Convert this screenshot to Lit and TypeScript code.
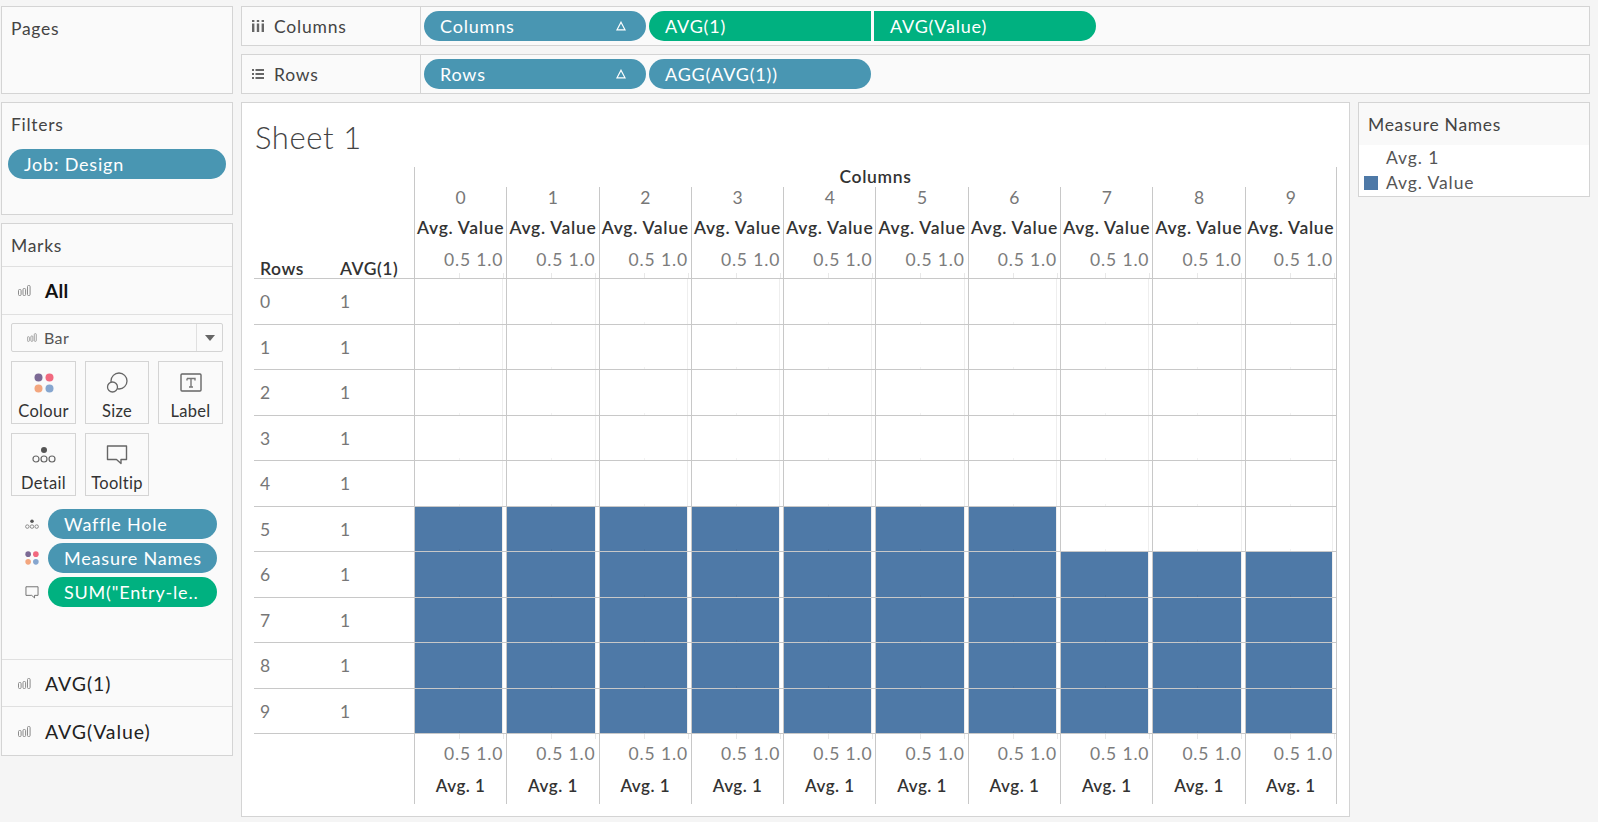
import { LitElement, html, css, svg } from "lit";
import { customElement } from "lit/decorators.js";

const barIcon = (w = 13, h = 11, c = "#8c8c8c") => html`<svg class="ic" width=${w} height=${h} viewBox="0 0 13 11" fill="none" stroke=${c} stroke-width="1"><rect x="0.5" y="4.5" width="2.6" height="6" rx="1"/><rect x="5" y="3.5" width="2.6" height="7" rx="1"/><rect x="9.5" y="0.5" width="2.6" height="10" rx="1"/></svg>`;
const colourIcon = (s = 20) => html`<svg width=${s} height=${s} viewBox="0 0 20 20"><circle cx="4.5" cy="4.5" r="4" fill="#7c6a95"/><circle cx="15.5" cy="4.5" r="4" fill="#f1697f"/><circle cx="4.5" cy="15.5" r="4" fill="#f3a67e"/><circle cx="15.5" cy="15.5" r="4" fill="#86a6cf"/></svg>`;
const sizeIcon = html`<svg width="22" height="22" viewBox="0 0 22 22" fill="none" stroke="#666" stroke-width="1.3"><circle cx="13" cy="9" r="8"/><circle cx="6.5" cy="15" r="5" fill="#fafafa"/></svg>`;
const labelIcon = html`<svg width="22" height="20" viewBox="0 0 22 20" fill="none"><rect x="1" y="1" width="20" height="17" rx="1" stroke="#666" stroke-width="1.4"/><path d="M7 5.5h8v2M11 5.5v8.5M9 14h4M7 7.5v-2" stroke="#777" stroke-width="1.4"/></svg>`;
const detailIcon = (s = 24) => html`<svg width=${s} height=${s * 0.75} viewBox="0 0 24 18" fill="none" stroke="#666" stroke-width="1.2"><circle cx="12" cy="4" r="3" fill="#555" stroke="none"/><circle cx="4" cy="13" r="3"/><circle cx="12" cy="13" r="3"/><circle cx="20" cy="13" r="3"/></svg>`;
const tipIcon = (w = 22, h = 20, c = "#666") => html`<svg width=${w} height=${h} viewBox="0 0 22 20" fill="none" stroke=${c} stroke-width="1.4" stroke-linejoin="round"><path d="M1.5 1h19v13.5h-5.5v4l-4.5-4h-9z"/></svg>`;
const delta = html`<svg class="delta" width="10" height="10" viewBox="0 0 10 10" fill="none" stroke="#fff" stroke-width="1.2"><path d="M5 1.2 9 8.8H1z"/></svg>`;
const colsIcon = html`<svg width="12" height="12" viewBox="0 0 12 12" fill="#666">${svg`<rect x="0" y="0" width="2.4" height="2"/><rect x="0" y="3.5" width="2.4" height="8.5"/><rect x="4.8" y="0" width="2.4" height="2"/><rect x="4.8" y="3.5" width="2.4" height="8.5"/><rect x="9.6" y="0" width="2.4" height="2"/><rect x="9.6" y="3.5" width="2.4" height="8.5"/>`}</svg>`;
const rowsIcon = html`<svg width="12" height="10" viewBox="0 0 12 10" fill="#666">${svg`<rect x="0" y="0" width="2" height="2"/><rect x="3.5" y="0" width="8.5" height="2"/><rect x="0" y="4" width="2" height="2"/><rect x="3.5" y="4" width="8.5" height="2"/><rect x="0" y="8" width="2" height="2"/><rect x="3.5" y="8" width="8.5" height="2"/>`}</svg>`;

const COLS = [0, 1, 2, 3, 4, 5, 6, 7, 8, 9];
const firstFilled = (col: number) => (col <= 6 ? 5 : 6);

@customElement("app-root")
export class AppRoot extends LitElement {
  static styles = css`
    :host { display: block; width: 1598px; height: 822px; background: #f5f5f5; font-family: "Lato", sans-serif; color: #444; overflow: hidden; }
    * { box-sizing: border-box; }
    .page { display: grid; grid-template-columns: 232px 1349px; column-gap: 8px; padding: 6px 0 0 1px; height: 822px; }
    .left { display: flex; flex-direction: column; gap: 8px; height: 750px; }
    .right { display: flex; flex-direction: column; gap: 8px; }
    .card { background: #fafafa; border: 1px solid #d4d4d4; }
    .cardtitle { font-size: 17.5px; letter-spacing: 0.7px; line-height: 22px; color: #444; padding: 11px 0 0 9px; }
    .pages { height: 88px; }
    .filters { height: 113px; }
    .pill { display: flex; align-items: center; height: 30px; border-radius: 15px; background: #4996b2; color: #fff; font-size: 18px; letter-spacing: 0.8px; padding-left: 16px; white-space: nowrap; flex: none; }
    .pill.green { background: #00b180; }
    .pill.sl { border-top-right-radius: 0; border-bottom-right-radius: 0; }
    .pill.sr { border-top-left-radius: 0; border-bottom-left-radius: 0; }
    .filters .pill { margin: 13px 6px 0 6px; }
    .delta { margin-left: auto; margin-right: 20px; }
    .marks { flex: 1; display: flex; flex-direction: column; }
    .marks .cardtitle { height: 43px; border-bottom: 1px solid #e0e0e0; padding-top: 11px; }
    .mrow { display: flex; align-items: center; height: 48px; border-bottom: 1px solid #e0e0e0; padding-left: 16px; font-size: 19.5px; letter-spacing: 0.9px; color: #222; }
    .mrow .ic { margin-right: 14px; }
    .mrow.all { font-weight: 700; color: #111; font-size: 19px; letter-spacing: 0.3px; padding-bottom: 1px; }
    .mrow.last { border-bottom: none; }
    .mbody { flex: 1; padding: 8px 9px 0 9px; }
    .dd { display: flex; align-items: center; height: 29px; width: 212px; margin-bottom: 9px; border: 1px solid #d4d4d4; border-radius: 2px; font-size: 16px; letter-spacing: 0.4px; color: #555; padding-left: 15px; }
    .dd .ic { margin-right: 7px; }
    .dd .arrow { margin-left: auto; width: 26px; height: 100%; border-left: 1px solid #e0e0e0; display: flex; align-items: center; justify-content: center; }
    .tri { width: 0; height: 0; border: 5px solid transparent; border-top: 6px solid #666; border-bottom: none; }
    .btns { display: grid; grid-template-columns: 65px 64px 65px; column-gap: 9px; row-gap: 9px; grid-auto-rows: 63px; }
    .btn { border: 1px solid #d4d4d4; display: flex; flex-direction: column; align-items: center; font-size: 16.5px; letter-spacing: 0.3px; color: #333; }
    .btn .iw { height: 39px; display: flex; align-items: center; justify-content: center; padding-top: 3px; }
    .btn .lb { line-height: 20px; }
    .fields { display: flex; flex-direction: column; gap: 4px; margin-top: 13px; }
    .fields .f { display: flex; align-items: center; }
    .fields .fi { width: 37px; display: flex; justify-content: flex-end; padding-right: 9px; }
    .fields .pill { width: 169px; }
    .shelf { display: flex; height: 40px; background: #fafafa; border: 1px solid #d4d4d4; align-items: center; }
    .shelf .name { width: 179px; height: 100%; border-right: 1px solid #d4d4d4; display: flex; align-items: center; font-size: 17.5px; letter-spacing: 0.8px; padding-left: 10px; gap: 10px; color: #444; flex: none; }
    .shelf .pills { display: flex; padding-left: 3px; }
    .pills .pill { width: 222px; margin-right: 3px; }
    .bottom { display: flex; gap: 8px; }
    .view { width: 1109px; height: 715px; background: #fff; border: 1px solid #d4d4d4; padding-left: 12px; }
    .sheet { height: 64px; font-size: 31px; letter-spacing: 0.6px; font-weight: 300; color: #444; padding: 14px 0 0 1px; line-height: 40px; }
    .table { display: grid; grid-template-columns: 80px 80px repeat(10, 92.3px); grid-template-rows: 20px 21px 36px 35px repeat(10, 45.5px) 37px 33px; font-size: 16px; }
    .corner { grid-column: 1 / 3; grid-row: 1 / 2; }
    .colhead { grid-column: 3 / 13; border-left: 1px solid #c8c8c8; border-right: 1px solid #c8c8c8; text-align: center; font-size: 17.5px; letter-spacing: 0.65px; font-weight: 600; color: #333; line-height: 20px; }
    .rh { grid-row: 2 / 5; display: flex; align-items: flex-end; padding: 0 0 0 6px; font-size: 17.5px; letter-spacing: 0.55px; font-weight: 600; color: #333; line-height: 18px; border-bottom: 1px solid #c8c8c8; }
    .vl { border-left: 1px solid #c8c8c8; text-align: center; white-space: nowrap; overflow: hidden; position: relative; }
    .vl.end { border-right: 1px solid #c8c8c8; }
    .num { color: #777; font-size: 17.5px; line-height: 21px; }
    .mn { font-size: 17.5px; letter-spacing: 0.7px; font-weight: 600; color: #333; line-height: 36px; padding-top: 2px; }
    .ax { color: #7c7c7c; font-size: 17.5px; letter-spacing: 0.85px; text-align: right; padding-right: 3px; }
    .ax.top { line-height: 32px; border-bottom: 1px solid #c8c8c8; }
    .ax.bot { line-height: 40px; }
    .ax::before, .ax::after { content: ""; position: absolute; width: 1px; height: 5px; background: #e8e8e8; }
    .ax.top::before { bottom: 0; left: 44px; }
    .ax.top::after { bottom: 0; left: 88px; }
    .ax.bot::before { top: 0; left: 44px; }
    .ax.bot::after { top: 0; left: 88px; }
    .rc { padding: 1px 0 0 6px; color: #777; font-size: 17.5px; line-height: 44px; border-bottom: 1px solid #c8c8c8; }
    .cell { border-left: 1px solid #c8c8c8; border-bottom: 1px solid #c8c8c8; padding-right: 3px; position: relative; }
    .cell.end { border-right: 1px solid #c8c8c8; }
    .inner { height: 100%; border-right: 1px solid #eeeeee; }
    .bar { height: 100%; background: #4e79a7; }
    .tick { position: absolute; left: 44px; bottom: 0; width: 1px; height: 2px; background: rgba(0, 0, 0, 0.05); }
    .foot { text-align: center; font-size: 17px; letter-spacing: 0.5px; font-weight: 600; color: #333; line-height: 30px; }
    .legend { width: 232px; height: 95px; background: #fff; border: 1px solid #d4d4d4; }
    .legend .cardtitle { height: 42px; background: #f9f9f9; }
    .li { display: flex; align-items: center; height: 25px; font-size: 17.5px; letter-spacing: 0.9px; color: #555; padding-left: 5px; gap: 8px; }
    .sw { width: 14px; height: 14px; flex: none; }
    .sw.on { background: #4e79a7; }
  `;

  render() {
    return html`<div class="page">
      <div class="left">
        <div class="card pages"><div class="cardtitle">Pages</div></div>
        <div class="card filters"><div class="cardtitle">Filters</div><div class="pill">Job: Design</div></div>
        <div class="card marks">
          <div class="cardtitle">Marks</div>
          <div class="mrow all">${barIcon()}All</div>
          <div class="mbody">
            <div class="dd">${barIcon(10, 9)}Bar<span class="arrow"><span class="tri"></span></span></div>
            <div class="btns">
              <div class="btn"><span class="iw">${colourIcon()}</span><span class="lb">Colour</span></div>
              <div class="btn"><span class="iw">${sizeIcon}</span><span class="lb">Size</span></div>
              <div class="btn"><span class="iw">${labelIcon}</span><span class="lb">Label</span></div>
              <div class="btn"><span class="iw">${detailIcon()}</span><span class="lb">Detail</span></div>
              <div class="btn"><span class="iw">${tipIcon()}</span><span class="lb">Tooltip</span></div>
            </div>
            <div class="fields">
              <div class="f"><span class="fi">${detailIcon(14)}</span><div class="pill">Waffle Hole</div></div>
              <div class="f"><span class="fi">${colourIcon(14)}</span><div class="pill">Measure Names</div></div>
              <div class="f"><span class="fi">${tipIcon(14, 13)}</span><div class="pill green">SUM("Entry-le..</div></div>
            </div>
          </div>
          <div class="mrow" style="border-top:1px solid #e0e0e0">${barIcon()}AVG(1)</div>
          <div class="mrow last">${barIcon()}AVG(Value)</div>
        </div>
      </div>
      <div class="right">
        <div class="shelf"><div class="name">${colsIcon}Columns</div><div class="pills">
          <div class="pill">Columns${delta}</div><div class="pill green sl">AVG(1)</div><div class="pill green sr" style="margin-left:0">AVG(Value)</div></div></div>
        <div class="shelf"><div class="name">${rowsIcon}Rows</div><div class="pills">
          <div class="pill">Rows${delta}</div><div class="pill">AGG(AVG(1))</div></div></div>
        <div class="bottom">
          <div class="view">
            <div class="sheet">Sheet 1</div>
            <div class="table">
              <div class="corner"></div>
              <div class="colhead">Columns</div>
              <div class="rh" style="grid-column:1">Rows</div>
              <div class="rh" style="grid-column:2">AVG(1)</div>
              ${COLS.map((c) => html`<div class="vl num ${c === 9 ? "end" : ""}" style="grid-row:2;grid-column:${c + 3}">${c}</div>`)}
              ${COLS.map((c) => html`<div class="vl mn ${c === 9 ? "end" : ""}" style="grid-row:3;grid-column:${c + 3}">Avg. Value</div>`)}
              ${COLS.map((c) => html`<div class="vl ax top ${c === 9 ? "end" : ""}" style="grid-row:4;grid-column:${c + 3}">0.5 1.0</div>`)}
              ${COLS.map((r) => html`
                <div class="rc">${r}</div><div class="rc">1</div>
                ${COLS.map((c) => html`<div class="cell ${c === 9 ? "end" : ""}"><div class="inner">${r >= firstFilled(c) ? html`<div class="bar"></div>` : ""}</div><span class="tick"></span></div>`)}
              `)}
              ${COLS.map((c) => html`<div class="vl ax bot ${c === 9 ? "end" : ""}" style="grid-row:15;grid-column:${c + 3}">0.5 1.0</div>`)}
              ${COLS.map((c) => html`<div class="vl foot ${c === 9 ? "end" : ""}" style="grid-row:16;grid-column:${c + 3}">Avg. 1</div>`)}
            </div>
          </div>
          <div class="legend">
            <div class="cardtitle">Measure Names</div>
            <div>
              <div class="li"><span class="sw"></span>Avg. 1</div>
              <div class="li"><span class="sw on"></span>Avg. Value</div>
            </div>
          </div>
        </div>
      </div>
    </div>`;
  }
}
